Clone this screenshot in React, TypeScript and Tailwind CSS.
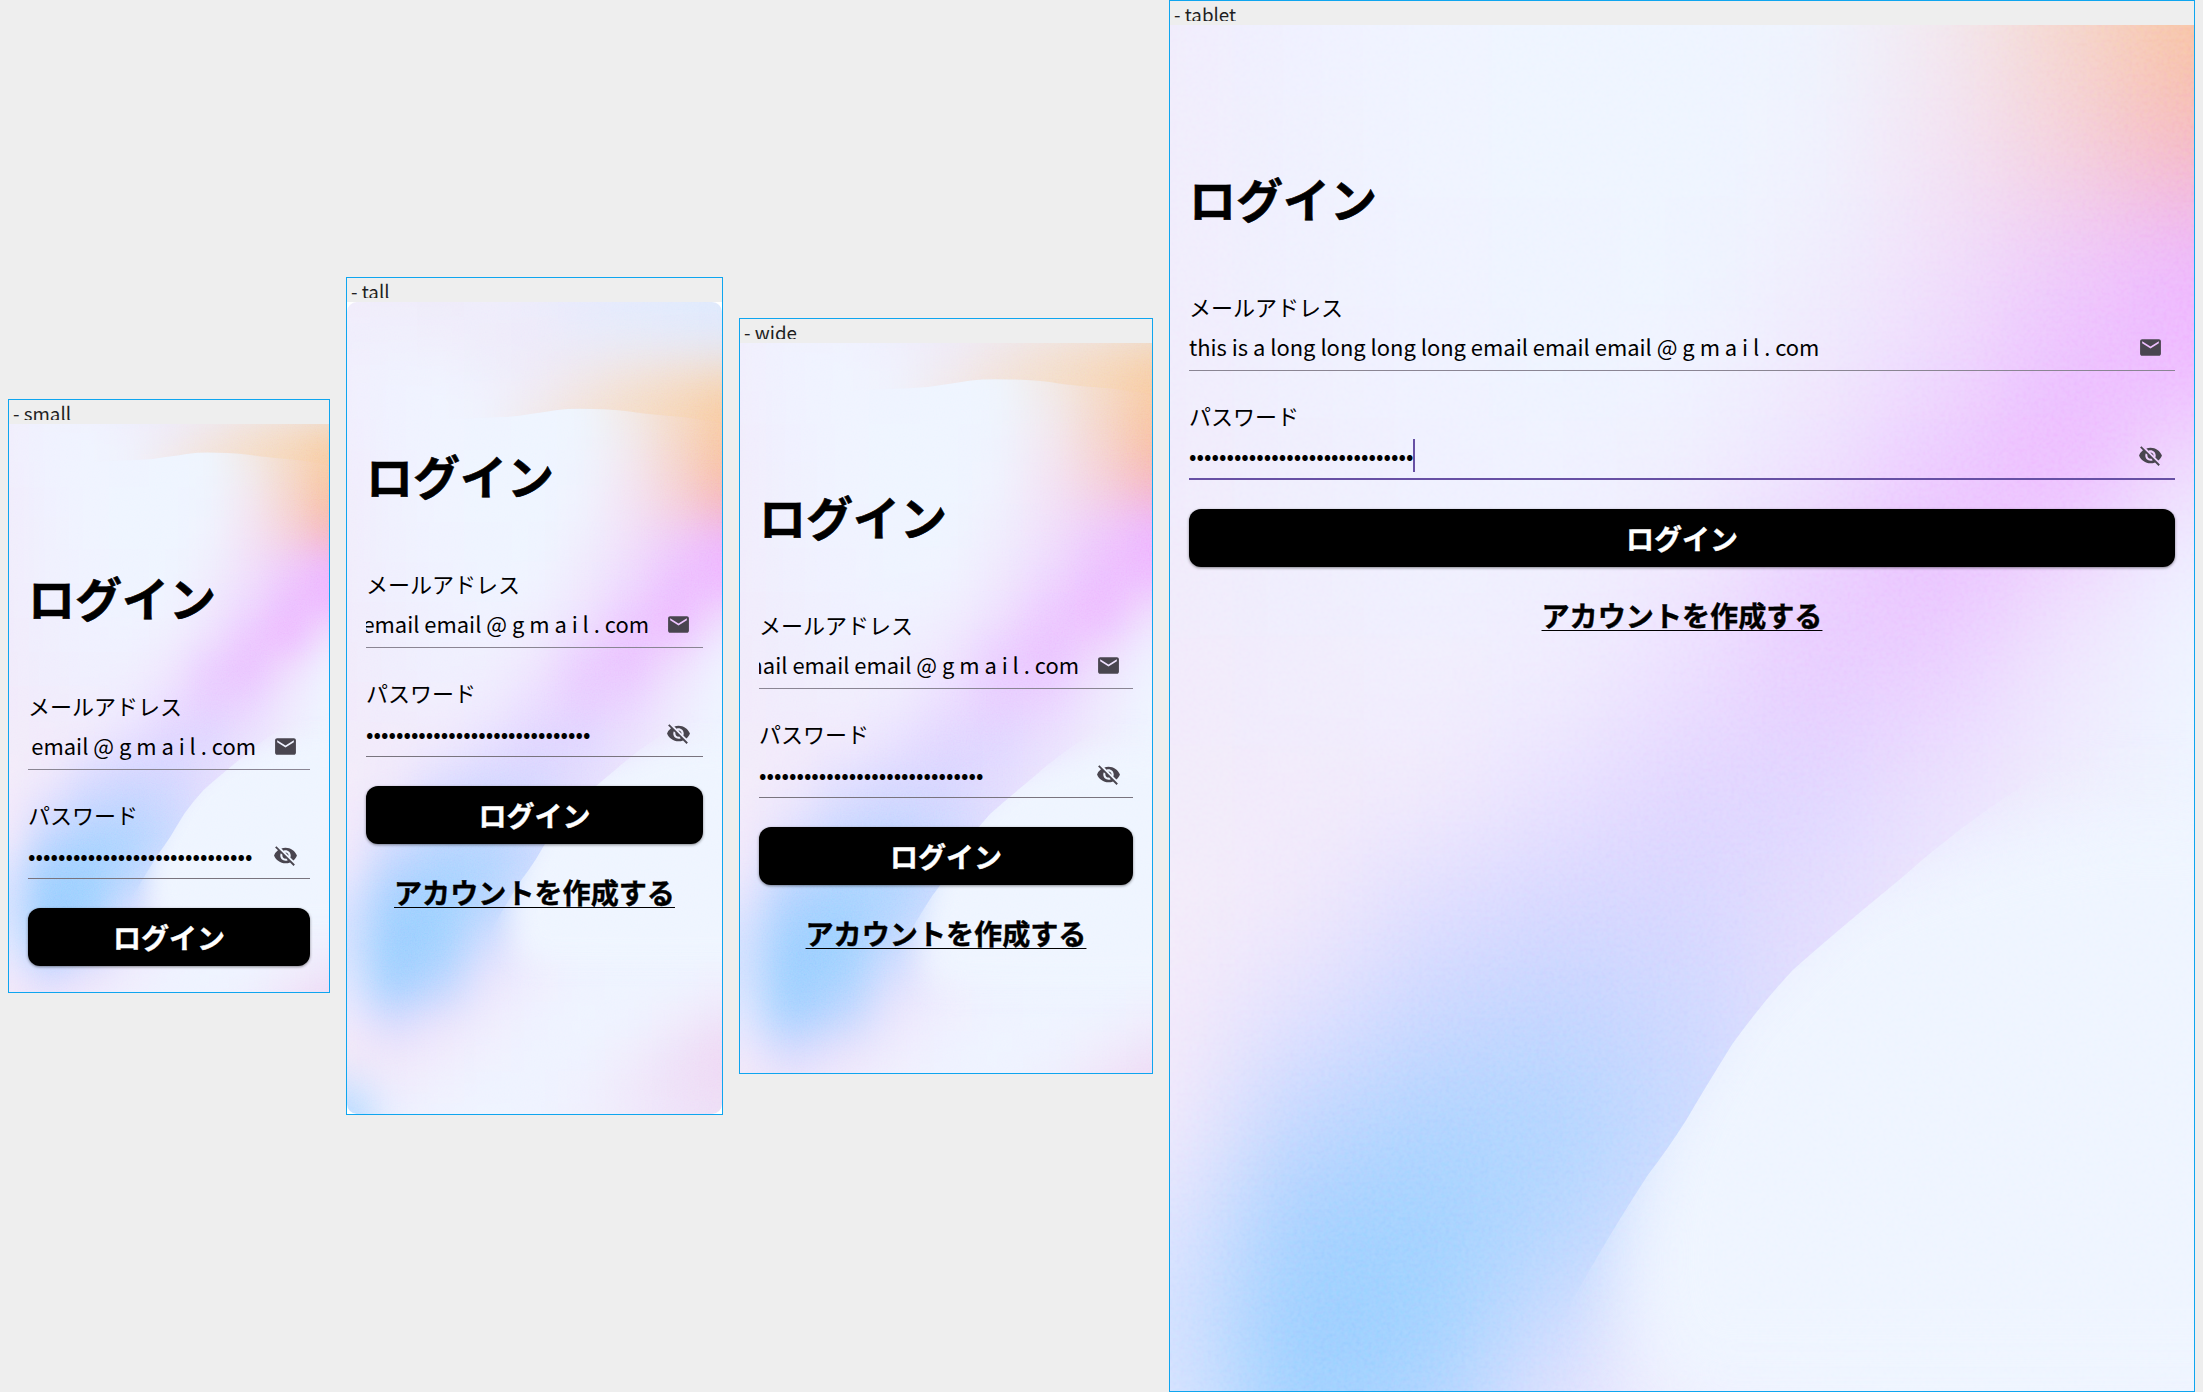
import { useId } from "react";
import { MdEmail, MdVisibilityOff } from "react-icons/md";
import clsx from "clsx";

const EMAIL = "this is a long long long long email email email @ g m a i l . com";
const PASSWORD = "•".repeat(30);

type Row = [y: number, colors: string];

/* Colour stops of the wallpaper, nine across each row, on a 375 x 812 card. */
const FIELD: Row[] = [
  [100, "f1effc f0f2ff f0f4ff eff4ff eff5ff eff5fe f2eae4 f5dcc8 f7d1ac"],
  [130, "f1eefd f0f2ff f0f4ff eff4ff eff5ff eff5fe f1ebee f5dacb f8cba6"],
  [165, "f1edfc f0f1ff f0f4ff eff5ff eff5ff eff3fe f3e8f2 f5d6d1 f8c3a6"],
  [200, "f1edfc f0f1fe f0f4ff eff5ff eff5ff f0f3fe f3e4f5 f5d3de f6bac3"],
  [240, "f1edfc f0f1fe f0f3ff eff4ff eff5ff f0effd f1e1fa efcdfa eeb9ff"],
  [280, "f1edfc f0f0fe f0f2ff eff4ff f0f4ff f0eafd eedbfe edc2ff efb9ff"],
  [320, "f1ecfc f0effd f0f1ff f0f2ff f0effe efe3fe edcaff eebaff efe2fe"],
  [360, "f1ecfb f0eefd f0f0fe f0effe f0e8fe ebcfff ebc2ff efdefe eff3ff"],
  [400, "f2ebfb f1edfc f1eefd f0ecfe ecdfff e8ceff ebd5ff efeafe eff5ff"],
  [440, "f2ecfa f2ebfb f1eafc e9e1ff e1d6ff e0d8ff ebe2fe efecfd eff5ff"],
  [480, "f3edfa f1e9fb e0deff d7d8ff d8d8ff e4ddfe ebe6fd eff3ff eff5ff"],
  [520, "f4eafa e2e1ff cad8ff c3d6ff cfd9ff e2dffe ece8fd eff5ff eff5ff"],
  [560, "f2eafc c2d7ff b0d5ff b3d6ff c8daff e4e3fe eff5ff eff5ff eff5ff"],
  [600, "dfe4ff a5d1ff a3d3ff b8d7ff dae0ff eef0ff eff5ff eff5ff eff5ff"],
  [640, "d6e2ff 9dd0ff a3d3ff d4deff efeafd eff4ff eff5ff eff5ff eff4ff"],
  [680, "e2e8ff a2d1ff bdd6ff ebe5fd f0effe eff3ff eff4ff eff4ff f0f0fe"],
  [720, "f0e9fd d8dbff ebe3fc f0edfd eff2ff eff4ff eff3ff f0edfc efe4f9"],
  [752, "f6e9f5 f1e7fa f1ecfc f0f1fe eff3ff eff3ff f0eefc efe3f9 efd8f4"],
  [785, "d8e5ff f0ecfc f0f1fe eff3ff eff3ff f0f1fe f0e9fb efe1f8 efdcf5"],
  [812, "b0d9ff edf0ff eff3ff eff4ff eff3ff f0f0fd f0ebfb efe4f9 eee0f7"],
];

const CREST: Row[] = [
  [0, "f1edfb f0edfb efecfa efedfb edecfb e8ebfc e4ebfd e2ebfd dfeafd"],
  [35, "f0eefc f0effc f0eefb efecfa eeebfa eaebfa e8ebf9 e6eafa e3e9fa"],
  [65, "f1effd f0f2fe f0f2fe efeefb efebf8 efe9f0 f0e7e8 f0e4e0 efe0d8"],
  [92, "f1effd f0f2ff f0f4ff f0f2fe f0ecf5 f2e6e3 f4dfce f6d9be f7d2aa"],
  [120, "f1effd f0f2ff f0f4ff f0f2fc f2e9ea f3e2d8 f4dfcc f6d8bd f8cba6"],
];

const STEP = 375 / 8;

function Mesh({ rows, blur }: { rows: Row[]; blur: string }) {
  return (
    <g filter={blur} shapeRendering="crispEdges">
      {rows.map(([y, colors], r) => {
        const top = r === 0 ? y - 60 : (rows[r - 1][0] + y) / 2;
        const bottom = r === rows.length - 1 ? y + 60 : (rows[r + 1][0] + y) / 2;
        return colors.split(" ").map((color, c) => (
          <rect
            key={`${r}-${c}`}
            x={c === 0 ? -80 : (c - 0.5) * STEP}
            y={top}
            width={c === 0 || c === 8 ? STEP / 2 + 80 : STEP}
            height={bottom - top}
            fill={`#${color}`}
          />
        ));
      })}
    </g>
  );
}

function Backdrop() {
  const id = useId().replace(/[^a-zA-Z0-9]/g, "");
  const ref = (name: string) => `url(#${name}${id})`;
  return (
    <svg
      className="absolute inset-0 h-full w-full"
      viewBox="0 0 375 812"
      preserveAspectRatio="xMidYMid slice"
      aria-hidden="true"
    >
      <defs>
        <clipPath id={`card${id}`}>
          <rect width="375" height="812" rx="10" />
        </clipPath>
        <clipPath id={`outside${id}`}>
          <path d="M400 375Q340 412 313 434Q288 450 267 469Q245 487 228 502Q216 515 206 529Q196 545 189 557Q182 568 175 577Q160 600 148 622L110 700H400Z" />
        </clipPath>
        <clipPath id={`crest${id}`}>
          <path d="M-20 -20H395V124Q360 118 336 115Q310 113 293 111Q268 107 246 107Q225 106 210 108Q198 110 183 112Q168 115 153 115Q80 118 -20 118Z" />
        </clipPath>
        <filter id={`soft${id}`} filterUnits="userSpaceOnUse" x="-60" y="-60" width="495" height="930" colorInterpolationFilters="sRGB">
          <feGaussianBlur stdDeviation="19" />
        </filter>
        <filter id={`glow${id}`} filterUnits="userSpaceOnUse" x="0" y="300" width="500" height="500" colorInterpolationFilters="sRGB">
          <feGaussianBlur stdDeviation="14" />
        </filter>
        <filter id={`grain${id}`} x="0" y="0" width="100%" height="100%" colorInterpolationFilters="sRGB">
          <feTurbulence type="fractalNoise" baseFrequency="0.7" numOctaves="2" seed="4" />
          <feColorMatrix values="1 0 0 0 0  0 1 0 0 0  0 0 1 0 0  0 0 0 0 1" />
        </filter>
      </defs>
      <g clipPath={ref("card")}>
        <rect width="375" height="812" fill="#f0f4ff" />
        <Mesh rows={FIELD} blur={ref("soft")} />
        <g clipPath={ref("outside")}>
          <path d="M430 445L350 440L305 448L245 468L200 510L172 560L163 610L175 660H430Z" fill="#eff5ff" filter={ref("glow")} />
        </g>
        <g clipPath={ref("crest")}>
          <Mesh rows={CREST} blur={ref("soft")} />
        </g>
        <rect width="375" height="812" filter={ref("grain")} className="opacity-20 mix-blend-soft-light" />
      </g>
    </svg>
  );
}

function Login({ overflowEmail, focused }: { overflowEmail: boolean; focused: boolean }) {
  return (
    <div className="relative flex flex-col px-[19px] pt-[139px] text-black">
      <h1 className="h-[68px] text-[47px] leading-[68px] font-bold whitespace-nowrap [-webkit-text-stroke:0.6px_black]">
        ログイン
      </h1>

      <label className="mt-[58px] h-8 text-[22px] leading-8">メールアドレス</label>
      <div className="mt-0.5 flex h-[47px] items-center border-b border-[#8a8593]">
        <div className={clsx("flex min-w-0 flex-1 overflow-hidden", overflowEmail && "justify-end")}>
          <span className="shrink-0 text-[21.93px] leading-8 whitespace-nowrap">{EMAIL}</span>
        </div>
        <MdEmail className="mr-3 ml-[17px] size-[25px] shrink-0 text-[#49454f]" />
      </div>

      <label className="mt-7 h-8 text-[22px] leading-8">パスワード</label>
      <div
        className={clsx(
          "mt-0.5 flex h-[47px] items-center",
          focused ? "border-b-2 border-[#6750a4]" : "border-b border-[#79747e]",
        )}
      >
        <div className="flex min-w-0 flex-1 items-center">
          <span className="pb-[3px] text-[22px] leading-8 whitespace-nowrap">{PASSWORD}</span>
          {focused && <span className="h-[33px] w-0.5 bg-[#6750a4]" />}
        </div>
        <MdVisibilityOff className="mr-3 ml-[17px] size-[25px] shrink-0 text-[#49454f]" />
      </div>

      <button className="mt-[29px] h-[58px] shrink-0 rounded-xl bg-black text-[28px] leading-[58px] font-bold text-white shadow-[0_1px_3px_rgba(0,0,0,0.45)] [-webkit-text-stroke:0.4px_white]">
        ログイン
      </button>
      <a className="mt-[27px] self-center text-[28.1px] leading-[42px] font-bold whitespace-nowrap underline decoration-1 underline-offset-[3px] [-webkit-text-stroke:0.4px_black]">
        アカウントを作成する
      </a>
    </div>
  );
}

function Preview({ name, size, overflowEmail = true, focused = false }: {
  name: string;
  size: string;
  overflowEmail?: boolean;
  focused?: boolean;
}) {
  return (
    <section className="shrink-0 border border-[#0ea5ef]">
      <header className="h-6 pl-1">
        <div className="h-5 overflow-hidden text-[18.75px] leading-[25px] text-[#1f1f23]">- {name}</div>
      </header>
      <div className={clsx("relative overflow-hidden bg-white", size)}>
        <Backdrop />
        <Login overflowEmail={overflowEmail} focused={focused} />
      </div>
    </section>
  );
}

export default function App() {
  return (
    <main className="flex h-[1392px] w-[2203px] items-center gap-4 overflow-hidden bg-[#eeeeee] pl-2 font-['Noto_Sans_CJK_JP',sans-serif]">
      <Preview name="small" size="h-[568px] w-[320px]" />
      <Preview name="tall" size="h-[812px] w-[375px]" />
      <Preview name="wide" size="h-[730px] w-[412px]" />
      <Preview name="tablet" size="h-[1366px] w-[1024px]" overflowEmail={false} focused />
    </main>
  );
}
